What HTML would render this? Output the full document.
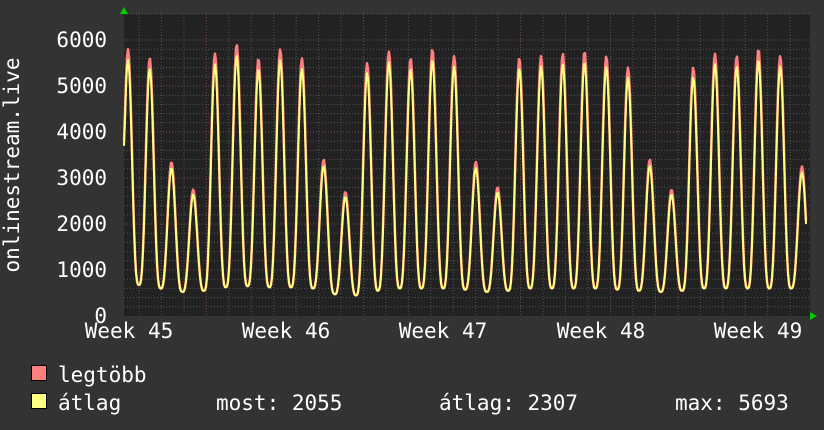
<!DOCTYPE html>
<html><head><meta charset="utf-8"><style>
html,body{margin:0;padding:0;background:#333;}
svg{display:block}
text{font-family:"DejaVu Sans Mono","Liberation Mono",monospace;font-size:21px;fill:#fff}
</style></head><body>
<svg id="s" width="824" height="430" xmlns="http://www.w3.org/2000/svg">
<rect width="824" height="430" fill="#333"/>
<rect x="124" y="14" width="686" height="302" fill="#222"/>
<g id="grid"></g>
<path id="pmax" fill="none" stroke="#ff7f7f" stroke-width="2.5" stroke-linejoin="round"/>
<path id="pavg" fill="none" stroke="#ffff80" stroke-width="2" stroke-linejoin="round"/>
<polygon points="120,14 128,14 124,7" fill="#0c0"/>
<polygon points="810,312 810,320 817,316" fill="#0c0"/>
<g text-anchor="end">
<text x="107" y="47">6000</text>
<text x="107" y="93">5000</text>
<text x="107" y="139">4000</text>
<text x="107" y="185">3000</text>
<text x="107" y="231">2000</text>
<text x="107" y="277">1000</text>
<text x="107" y="323">0</text>
</g>
<text transform="translate(19,165) rotate(-90)" text-anchor="middle">onlinestream.live</text>
<g text-anchor="middle">
<text x="129" y="338">Week 45</text>
<text x="286" y="338">Week 46</text>
<text x="443" y="338">Week 47</text>
<text x="601" y="338">Week 48</text>
<text x="758" y="338">Week 49</text>
</g>
<rect x="31.5" y="365.5" width="15" height="15" fill="#ff7f7f" stroke="#000"/>
<rect x="31.5" y="393.5" width="15" height="15" fill="#ffff80" stroke="#000"/>
<text x="58" y="382">legtöbb</text>
<text x="58" y="410">átlag</text>
<text x="216" y="410">most: 2055</text>
<text x="439" y="410">átlag: 2307</text>
<text x="675" y="410">max: 5693</text>
</svg>
<script>
var g=document.getElementById('grid'),h='';
for(var v=200;v<=6000;v+=200){var y=316-v*0.046;var maj=v%1000==0;
h+='<line x1="124" x2="810" y1="'+y+'" y2="'+y+'" stroke="'+(maj?'#7a4a4a':'#555')+'" stroke-dasharray="1,2"/>';}
h+='<line x1="124" x2="810" y1="14" y2="14" stroke="#555" stroke-dasharray="1,2"/>';
for(var i=0;i<32;i++){var x=139+i*22.45;if(x>810)break;var maj=(i%7==3);
h+='<line y1="14" y2="316" x1="'+x+'" x2="'+x+'" stroke="'+(maj?'#7a4a4a':'#555')+'" stroke-dasharray="1,2"/>';}
g.innerHTML=h;
var pk=[5800,5600,3350,2750,5700,5900,5600,5800,5600,3400,2700,5500,5750,5600,5800,5650,3350,2800,5600,5650,5700,5750,5650,5400,3400,2750,5400,5700,5650,5800,5650,3250];
var mn=[700,650,550,500,600,650,650,600,650,550,400,500,600,600,600,600,550,500,600,600,600,600,600,550,550,500,600,600,600,600,600,600];
var P=21.74,x0=128;
function val(x,r){var t=(x-x0)/P;var k=Math.round(t);var ph=t-k;
k=Math.max(0,Math.min(31,k));var k2=ph>0?Math.min(31,k+1):Math.max(0,k-1);
var base=mn[k]*(1-Math.abs(ph))+mn[k2]*Math.abs(ph);
var f=Math.pow((1+Math.cos(2*Math.PI*ph))/2,1.6);
return base+(pk[k]*r-base)*f;}
var a='',b='';
for(var x=124;x<=806;x+=1){var vm=val(x,1),va=val(x,0.96);
if(x==124){vm=3800;va=3700;}
a+=(x==124?'M':'L')+x+','+(316-vm*0.046).toFixed(1);
b+=(x==124?'M':'L')+x+','+(316-va*0.046).toFixed(1);}
document.getElementById('pmax').setAttribute('d',a);
document.getElementById('pavg').setAttribute('d',b);
</script>
</body></html>
